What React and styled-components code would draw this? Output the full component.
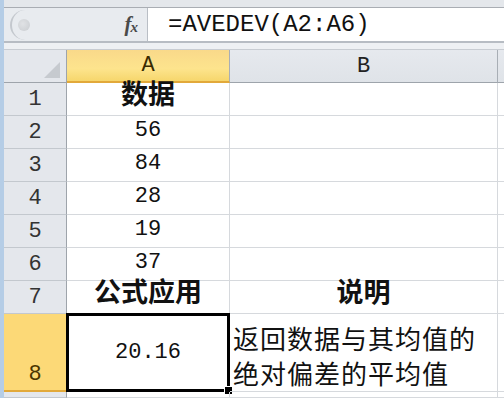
import React from 'react';
import styled, { createGlobalStyle, css } from 'styled-components';

const GlobalStyle = createGlobalStyle`
  html, body {
    margin: 0;
    padding: 0;
    background: #ffffff;
    overflow: hidden;
  }
`;

const Frame = styled.div`
  width: 504px;
  height: 398px;
  display: flex;
  flex-direction: column;
  border-left: 4px solid #b5cde6;
  box-sizing: border-box;
  background: #e9ecf0;
  overflow: hidden;
`;

const TopStrip = styled.div`
  height: 7px;
  background: #e4e7eb;
  border-bottom: 1px solid #a9adb3;
`;

const FormulaBar = styled.div`
  height: 33px;
  display: flex;
  border-bottom: 2px solid #b7bcc3;
`;

const NameArea = styled.div`
  width: 144px;
  display: flex;
  align-items: center;
  justify-content: space-between;
  padding: 0 10px 0 6px;
  box-sizing: border-box;
  background: #e8ebef;
  border-right: 1px solid #b9bec5;
`;

const Knob = styled.div`
  width: 26px;
  height: 30px;
  border-left: 2px solid #c4c8ce;
  border-radius: 15px 0 0 15px;
  display: flex;
  align-items: center;
  padding-left: 6px;
  box-sizing: border-box;
  &::after {
    content: '';
    width: 12px;
    height: 12px;
    border-radius: 50%;
    background: radial-gradient(circle at 40% 40%, #e0e2e5, #c9ccd0);
  }
`;

const Fx = styled.span`
  font-family: 'Liberation Serif', serif;
  font-style: italic;
  font-weight: bold;
  font-size: 21px;
  color: #4a4a4a;
  letter-spacing: -1px;
  sub {
    font-size: 15px;
    vertical-align: -1px;
  }
`;

const FormulaInput = styled.div`
  flex: 1;
  background: #ffffff;
  display: flex;
  align-items: center;
  padding-left: 20px;
  font-family: 'Liberation Mono', monospace;
  font-size: 24px;
  color: #111;
`;

const Spacer = styled.div`
  height: 6px;
  background: #eef0f3;
  border-bottom: 1px solid #c8ccd2;
`;

const Sheet = styled.div`
  display: grid;
  grid-template-columns: 63px 163px 268px 1fr;
  grid-template-rows: 33px repeat(7, 33px) 78px 1fr;
  background: #ffffff;
  flex: 1;
`;

const mono = css`
  font-family: 'Liberation Mono', 'Noto Sans CJK SC', monospace;
`;

const Corner = styled.div`
  background: #e4e7ec;
  border-right: 1px solid #9ea4ab;
  border-bottom: 1px solid #9ea4ab;
  position: relative;
  &::after {
    content: '';
    position: absolute;
    right: 6px;
    bottom: 4px;
    border-style: solid;
    border-width: 0 0 16px 16px;
    border-color: transparent transparent #c6cacf transparent;
  }
`;

const ColHead = styled.div`
  ${mono};
  font-size: 22px;
  color: #222;
  display: flex;
  align-items: center;
  justify-content: center;
  border-right: 1px solid #a8aeb5;
  border-bottom: 1px solid #9ea4ab;
  background: ${(p) =>
    p.$active
      ? 'linear-gradient(#f9d98a, #fde48d 60%, #f6d66c)'
      : 'linear-gradient(#e6e9ee, #dfe3e8)'};
  ${(p) => p.$active && 'border-bottom: 2px solid #e2a93a; color: #3a2a00;'}
`;

const RowHead = styled.div`
  ${mono};
  font-size: 22px;
  color: #333;
  display: flex;
  align-items: flex-end;
  justify-content: center;
  padding-bottom: 3px;
  box-sizing: border-box;
  border-right: 1px solid #9ea4ab;
  border-bottom: 1px solid #c3c8ce;
  background: ${(p) => (p.$active ? '#fcd977' : '#e4e7ec')};
  ${(p) => p.$active && 'border-bottom: 2px solid #e2a93a; color: #4a3500;'}
`;

const Cell = styled.div`
  ${mono};
  font-size: ${(p) => (p.$cjk ? '27px' : '22px')};
  font-weight: ${(p) => (p.$bold ? 700 : 400)};
  color: #111;
  display: flex;
  flex-direction: column;
  justify-content: ${(p) => p.$valign || 'flex-end'};
  align-items: ${(p) => p.$align || 'center'};
  padding: 0 3px 1px;
  box-sizing: border-box;
  border-right: 1px solid #d6d9dd;
  border-bottom: 1px solid #d6d9dd;
  line-height: 33px;
  position: relative;
`;

const NoteLine = styled.div`
  font-family: 'Noto Sans CJK SC', sans-serif;
  font-size: 26px;
  letter-spacing: 1px;
  height: 35px;
  line-height: 35px;
  color: #111;
  white-space: nowrap;
`;

const Selection = styled.div`
  position: absolute;
  left: -1px;
  top: -1px;
  right: -1px;
  bottom: -1px;
  border: 3px solid #000;
  pointer-events: none;
  &::after {
    content: '';
    position: absolute;
    right: -6px;
    bottom: -6px;
    width: 7px;
    height: 7px;
    background: #000;
    border: 1px solid #fff;
  }
`;

const data = ['56', '84', '28', '19', '37'];

export default function App() {
  return (
    <>
      <GlobalStyle />
      <Frame>
        <TopStrip />
        <FormulaBar>
          <NameArea>
            <Knob />
            <Fx>
              f<sub>x</sub>
            </Fx>
          </NameArea>
          <FormulaInput>=AVEDEV(A2:A6)</FormulaInput>
        </FormulaBar>
        <Spacer />
        <Sheet>
          <Corner />
          <ColHead $active>A</ColHead>
          <ColHead>B</ColHead>
          <ColHead />

          <RowHead>1</RowHead>
          <Cell $cjk $bold>数据</Cell>
          <Cell />
          <Cell />

          {data.map((v, i) => (
            <React.Fragment key={v}>
              <RowHead>{i + 2}</RowHead>
              <Cell>{v}</Cell>
              <Cell />
              <Cell />
            </React.Fragment>
          ))}

          <RowHead>7</RowHead>
          <Cell $cjk $bold>公式应用</Cell>
          <Cell $cjk $bold>说明</Cell>
          <Cell />

          <RowHead $active>8</RowHead>
          <Cell $valign="center">
            20.16
            <Selection />
          </Cell>
          <Cell $align="flex-start" $valign="flex-end">
            <NoteLine>返回数据与其均值的</NoteLine>
            <NoteLine>绝对偏差的平均值</NoteLine>
          </Cell>
          <Cell />

          <RowHead />
          <Cell />
          <Cell />
          <Cell />
        </Sheet>
      </Frame>
    </>
  );
}
